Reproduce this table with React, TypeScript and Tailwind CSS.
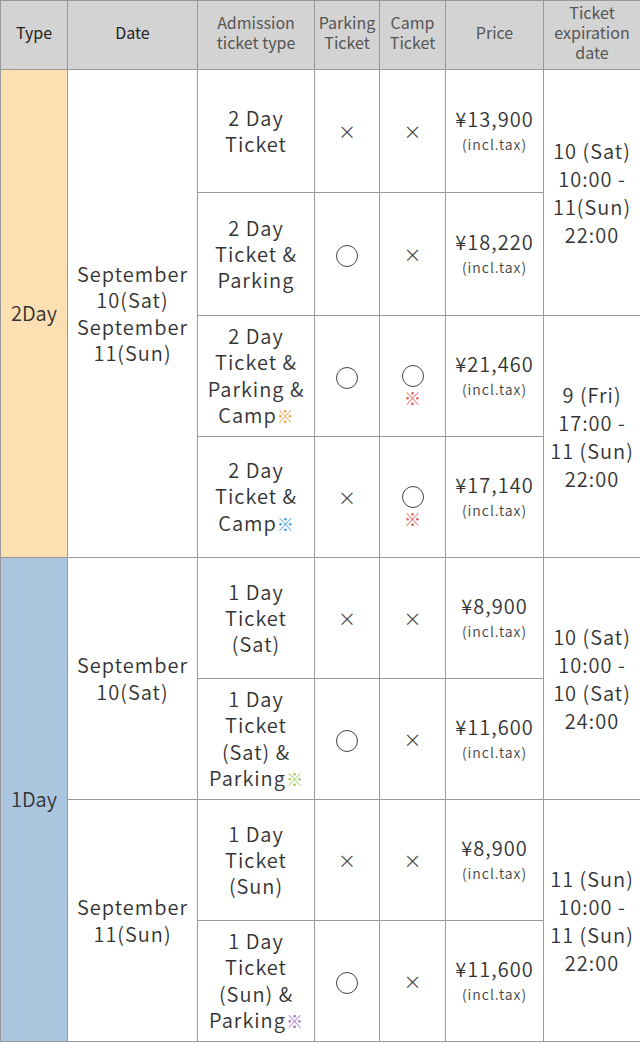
import React from "react";

const F = { fontFamily: '"Noto Sans CJK JP", "Noto Sans", sans-serif' };

const Cross = () => <span className="text-[18px] text-[#444] tracking-normal">×</span>;
const Circle = () => (
  <span className="inline-block w-[22px] h-[22px] rounded-full border border-[#444] align-middle"></span>
);
const Kome = ({ c }: { c: string }) => <span className={`text-[17px] tracking-normal ${c}`}>※</span>;

const Price = ({ v }: { v: string }) => (
  <div className="flex flex-col items-center">
    <span className="text-[20px] leading-[26px] text-[#333]">{v}</span>
    <span className="text-[14px] leading-[24px] text-[#444]">(incl.tax)</span>
  </div>
);

const td = "border border-[#999] text-center align-middle p-0";
const th = "border border-[#999] text-center align-middle p-0 pb-[7px] font-normal";

const CampCircle = () => (
  <div className="flex flex-col items-center pt-[21px]">
    <Circle />
    <span className="leading-[20px]"><Kome c="text-[#e85a5a]" /></span>
  </div>
);

export default function App() {
  return (
    <div style={F} className="w-[640px] bg-white text-[#333] font-[350]">
      <table className="w-[640px] table-fixed border-collapse">
        <colgroup>
          <col className="w-[67px]" />
          <col className="w-[130px]" />
          <col className="w-[117px]" />
          <col className="w-[65px]" />
          <col className="w-[66px]" />
          <col className="w-[98px]" />
          <col className="w-[97px]" />
        </colgroup>
        <thead>
          <tr className="h-[69px] bg-[#d3d3d3] text-[16px] leading-[20px]">
            <th className={`${th} text-[#222]`}>Type</th>
            <th className={`${th} text-[#222]`}>Date</th>
            <th className={`${th} text-[#555]`}>Admission<br />ticket type</th>
            <th className={`${th} text-[#555]`}>Parking<br />Ticket</th>
            <th className={`${th} text-[#555]`}>Camp<br />Ticket</th>
            <th className={`${th} text-[#555]`}>Price</th>
            <th className={`${th} text-[#555]`}>Ticket<br />expiration<br />date</th>
          </tr>
        </thead>
        <tbody className="text-[20px] leading-[26.3px] tracking-[1px]">
          <tr className="h-[123px]">
            <td rowSpan={4} className={`${td} bg-[#fde0b2] tracking-normal`}>2Day</td>
            <td rowSpan={4} className={td}>September<br />10(Sat)<br />September<br />11(Sun)</td>
            <td className={td}>2 Day<br />Ticket</td>
            <td className={td}><Cross /></td>
            <td className={td}><Cross /></td>
            <td className={td}><Price v="¥13,900" /></td>
            <td rowSpan={2} className={`${td} leading-[28px]`}>10 (Sat)<br />10:00 -<br />11(Sun)<br />22:00</td>
          </tr>
          <tr className="h-[123px]">
            <td className={td}>2 Day<br />Ticket &amp;<br />Parking</td>
            <td className={td}><Circle /></td>
            <td className={td}><Cross /></td>
            <td className={td}><Price v="¥18,220" /></td>
          </tr>
          <tr className="h-[121px]">
            <td className={td}>2 Day<br />Ticket &amp;<br />Parking &amp;<br />Camp<Kome c="text-[#e8a33a]" /></td>
            <td className={td}><Circle /></td>
            <td className={td}><CampCircle /></td>
            <td className={td}><Price v="¥21,460" /></td>
            <td rowSpan={2} className={`${td} leading-[28px]`}>9 (Fri)<br />17:00 -<br />11 (Sun)<br />22:00</td>
          </tr>
          <tr className="h-[121px]">
            <td className={td}>2 Day<br />Ticket &amp;<br />Camp<Kome c="text-[#3a9de0]" /></td>
            <td className={td}><Cross /></td>
            <td className={td}><CampCircle /></td>
            <td className={td}><Price v="¥17,140" /></td>
          </tr>
          <tr className="h-[121px]">
            <td rowSpan={4} className={`${td} bg-[#abc5df] tracking-normal`}>1Day</td>
            <td rowSpan={2} className={td}>September<br />10(Sat)</td>
            <td className={td}>1 Day<br />Ticket<br />(Sat)</td>
            <td className={td}><Cross /></td>
            <td className={td}><Cross /></td>
            <td className={td}><Price v="¥8,900" /></td>
            <td rowSpan={2} className={`${td} leading-[28px]`}>10 (Sat)<br />10:00 -<br />10 (Sat)<br />24:00</td>
          </tr>
          <tr className="h-[121px]">
            <td className={td}>1 Day<br />Ticket<br />(Sat) &amp;<br />Parking<Kome c="text-[#9ccc5a]" /></td>
            <td className={td}><Circle /></td>
            <td className={td}><Cross /></td>
            <td className={td}><Price v="¥11,600" /></td>
          </tr>
          <tr className="h-[121px]">
            <td rowSpan={2} className={td}>September<br />11(Sun)</td>
            <td className={td}>1 Day<br />Ticket<br />(Sun)</td>
            <td className={td}><Cross /></td>
            <td className={td}><Cross /></td>
            <td className={td}><Price v="¥8,900" /></td>
            <td rowSpan={2} className={`${td} leading-[28px]`}>11 (Sun)<br />10:00 -<br />11 (Sun)<br />22:00</td>
          </tr>
          <tr className="h-[121px]">
            <td className={td}>1 Day<br />Ticket<br />(Sun) &amp;<br />Parking<Kome c="text-[#a06ad0]" /></td>
            <td className={td}><Circle /></td>
            <td className={td}><Cross /></td>
            <td className={td}><Price v="¥11,600" /></td>
          </tr>
        </tbody>
      </table>
    </div>
  );
}
